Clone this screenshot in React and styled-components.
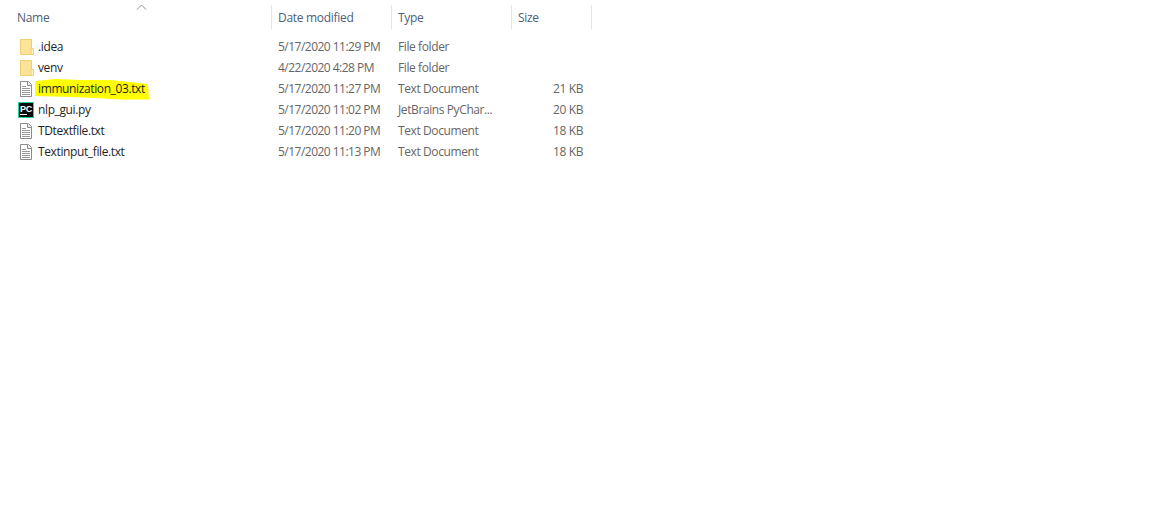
import React from 'react';
import styled, {createGlobalStyle} from 'styled-components';

const GlobalStyle = createGlobalStyle`
    html, body {
        margin: 0;
        background: #fff;
    }
    body {
        font-family: "Open Sans", "Liberation Sans", sans-serif;
        font-size: 12px;
    }
`

const Explorer = styled.div`
    width: 592px;
    height: 513px;
    padding: 5px 0 0 10px;
    box-sizing: border-box;
`

const Columns = `
    display: grid;
    grid-template-columns: 262px 120px 120px 80px;
`

const Header = styled.div`
    ${Columns}
    height: 25px;
    margin-bottom: 6px;
    color: #4c607a;
`

const HeaderCell = styled.div`
    position: relative;
    display: flex;
    align-items: center;
    padding: 0 0 1px ${props => props.$first ? '7px' : '6px'};
    border-right: 1px solid #e5e5e5;
    letter-spacing: -0.3px;
`

const SortArrow = styled.svg`
    position: absolute;
    left: 126px;
    top: -1px;
    width: 11px;
    height: 6px;
`

const Row = styled.div`
    ${Columns}
    height: 21px;
    align-items: center;
`

const NameCell = styled.div`
    position: relative;
    display: flex;
    align-items: center;
    color: #1f1f1f;
    letter-spacing: -0.38px;
`

const IconSlot = styled.svg`
    width: 16px;
    height: 16px;
    margin: 0 4px 0 8px;
    flex: none;
`

const Highlight = styled.svg`
    position: absolute;
    left: 25px;
    top: -1px;
    width: 114px;
    height: 22px;
`

const FileName = styled.span`
    position: relative;
`

const Cell = styled.div`
    padding-left: 6px;
    color: #666;
    white-space: nowrap;
    letter-spacing: ${props => props.$tight ? '-0.52px' : '-0.4px'};
`

const SizeCell = styled(Cell)`
    padding: 0 9px 0 0;
    text-align: right;
`

const files = [
    {name: '.idea', date: '5/17/2020 11:29 PM', type: 'File folder', size: '', kind: 'folder'},
    {name: 'venv', date: '4/22/2020 4:28 PM', type: 'File folder', size: '', kind: 'folder'},
    {name: 'immunization_03.txt', date: '5/17/2020 11:27 PM', type: 'Text Document', size: '21 KB', kind: 'text', marked: true},
    {name: 'nlp_gui.py', date: '5/17/2020 11:02 PM', type: 'JetBrains PyChar...', size: '20 KB', kind: 'pycharm'},
    {name: 'TDtextfile.txt', date: '5/17/2020 11:20 PM', type: 'Text Document', size: '18 KB', kind: 'text'},
    {name: 'Textinput_file.txt', date: '5/17/2020 11:13 PM', type: 'Text Document', size: '18 KB', kind: 'text'},
]

function FileIcon({kind}) {
    if (kind === 'folder') {
        return (
            <IconSlot viewBox="0 0 16 16">
                <path d="M2.5 0.5h11v15h-11z" fill="#fbe39a" stroke="#efcf72" />
                <path d="M13 9.5h2.5v6H13z" fill="#fff4cc" stroke="#efcf72" />
            </IconSlot>
        )
    }
    if (kind === 'pycharm') {
        return (
            <IconSlot viewBox="0 0 16 16">
                <rect x="0.5" y="0.5" width="15" height="15" fill="#0a0a0a" stroke="#1ed3a0" />
                <rect x="2" y="12" width="7" height="1" fill="#fff" />
                <text x="2" y="10" fill="#fff" fontSize="9" fontWeight="700" letterSpacing="-0.2" fontFamily="Liberation Sans, sans-serif">PC</text>
            </IconSlot>
        )
    }
    return (
        <IconSlot viewBox="0 0 16 16">
            <path d="M2.5 0.5h8l3 3v12h-11z" fill="#fff" stroke="#8c8c8c" />
            <path d="M9.5 0.5v4h4" fill="#e8e8e8" stroke="#8c8c8c" />
            <path d="M4 5.5h4M4 7.5h8M4 9.5h8M4 11.5h8M4 13.5h8" stroke="#9a9a9a" />
        </IconSlot>
    )
}

function Marker() {
    return (
        <Highlight viewBox="0 0 114 22">
            <path d="M0 2 L20 0 L45 1 L75 1 L95 3 L113 5 L114 20.5 L85 20.5 L60 19 L35 18 L0 17 Z" fill="#ffff00" />
        </Highlight>
    )
}

export default function App() {
    return (
        <>
        <GlobalStyle />
        <Explorer>
            <Header>
                <HeaderCell $first>
                    Name
                    <SortArrow viewBox="0 0 11 6">
                        <path d="M1 5.5 L5.5 1 L10 5.5" fill="none" stroke="#8a8f98" />
                    </SortArrow>
                </HeaderCell>
                <HeaderCell>Date modified</HeaderCell>
                <HeaderCell>Type</HeaderCell>
                <HeaderCell>Size</HeaderCell>
            </Header>
            {files.map(file =>
                <Row key={file.name}>
                    <NameCell>
                        {file.marked && <Marker />}
                        <FileIcon kind={file.kind} />
                        <FileName>{file.name}</FileName>
                    </NameCell>
                    <Cell $tight>{file.date}</Cell>
                    <Cell>{file.type}</Cell>
                    <SizeCell>{file.size}</SizeCell>
                </Row>
            )}
        </Explorer>
        </>
    );
}
